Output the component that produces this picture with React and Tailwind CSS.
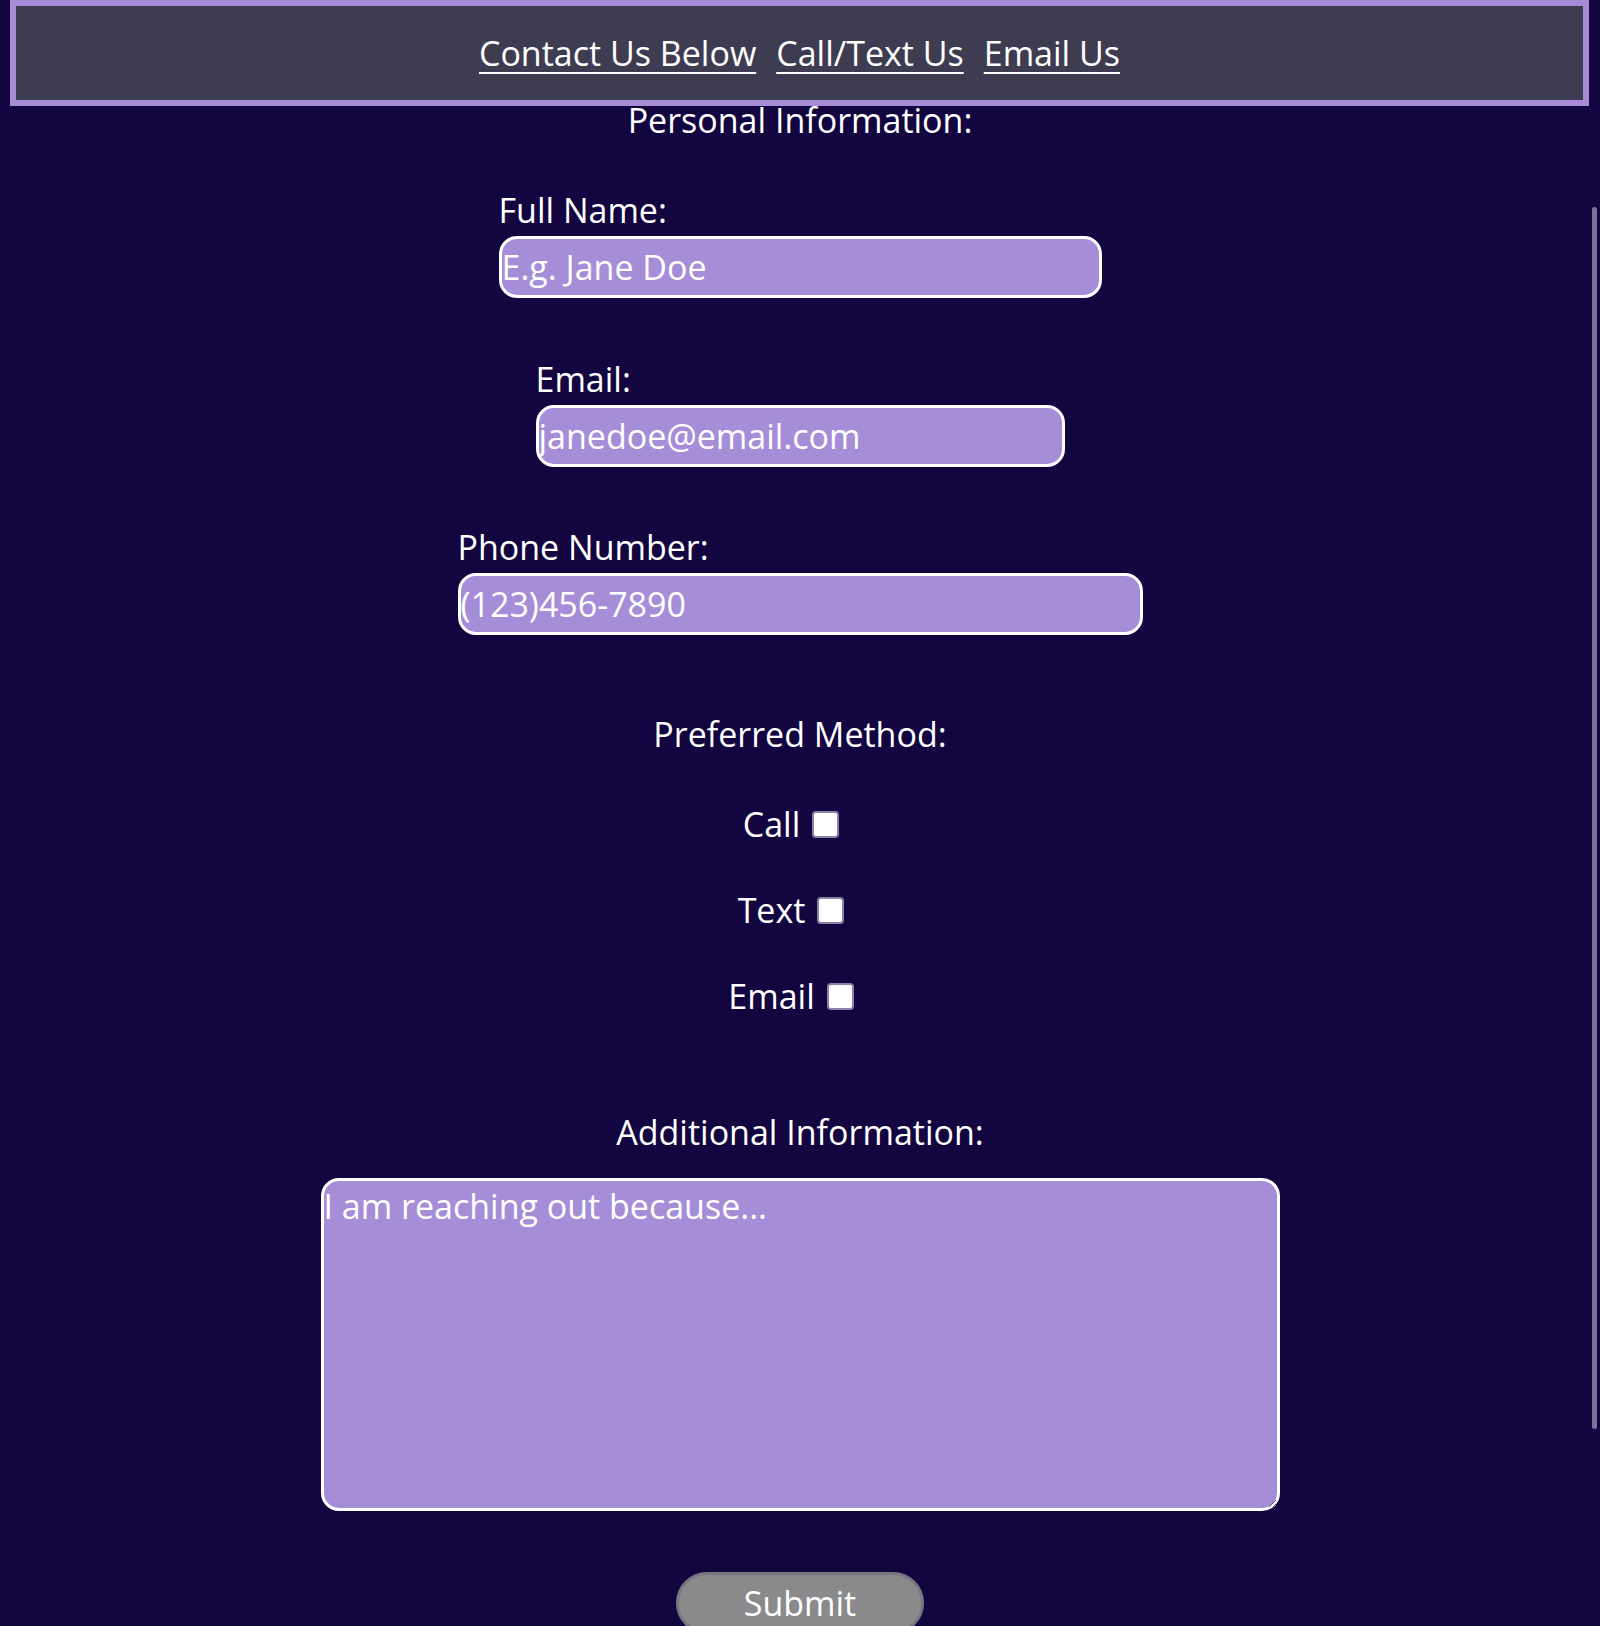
import React from "react";

const font = { fontFamily: '"Open Sans", "Noto Sans", sans-serif' };

const Field = ({ label, placeholder, width }) => (
  <div className="flex flex-col items-start">
    <label className="text-[34px] leading-[40px] text-white">{label}</label>
    <input
      type="text"
      placeholder={placeholder}
      className={`mt-[6px] h-[62px] ${width} rounded-[18px] border-[3px] border-white bg-[#a68dd8] p-0 text-[34px] text-white placeholder:text-white outline-none`}
    />
  </div>
);

const Method = ({ label }) => (
  <div className="flex items-center justify-center gap-[12px] pr-[18px] text-[34px] leading-[40px] text-white">
    <span>{label}</span>
    <span className="h-[27px] w-[27px] rounded-[4px] border-2 border-[#8b82a8] bg-white" />
  </div>
);

export default function App() {
  return (
    <div
      className="relative h-[1626px] overflow-hidden bg-[#120540] text-white"
      style={font}
    >
      {/* nav */}
      <nav className="ml-[10px] mr-[11px] flex h-[106px] items-center justify-center gap-[20px] border-[6px] border-[#a88bd8] bg-[#3e3c50] text-[34px]">
        <a href="#" className="underline underline-offset-[6px] decoration-2">Contact Us Below</a>
        <a href="#" className="underline underline-offset-[6px] decoration-2">Call/Text Us</a>
        <a href="#" className="underline underline-offset-[6px] decoration-2">Email Us</a>
      </nav>

      <form className="flex flex-col items-center">
        <h2 className="mt-[-6px] text-[34px] leading-[40px]">Personal Information:</h2>

        <div className="mt-[50px]">
          <Field label="Full Name:" placeholder="E.g. Jane Doe" width="w-[603px]" />
        </div>
        <div className="mt-[61px]">
          <Field label="Email:" placeholder="janedoe@email.com" width="w-[529px]" />
        </div>
        <div className="mt-[60px]">
          <Field label="Phone Number:" placeholder="(123)456-7890" width="w-[685px]" />
        </div>

        <h2 className="mt-[79px] text-[34px] leading-[40px]">Preferred Method:</h2>
        <div className="mt-[50px]">
          <Method label="Call" />
        </div>
        <div className="mt-[46px]">
          <Method label="Text" />
        </div>
        <div className="mt-[46px]">
          <Method label="Email" />
        </div>

        <h2 className="mt-[96px] text-[34px] leading-[40px]">Additional Information:</h2>
        <textarea
          placeholder="I am reaching out because..."
          className="mt-[26px] h-[333px] w-[959px] rounded-[18px] border-[3px] border-white bg-[#a68dd8] p-0 text-[34px] text-white placeholder:text-white outline-none"
        />

        <button
          type="button"
          className="mt-[61px] h-[62px] w-[248px] rounded-full border-[3px] border-[#77777d] bg-[#8a8a8c] text-[34px] text-white"
        >
          Submit
        </button>
      </form>

      {/* scrollbar thumb */}
      <div className="absolute right-[3px] top-[207px] h-[1222px] w-[5px] rounded-full bg-[#7b7297]" />
    </div>
  );
}
